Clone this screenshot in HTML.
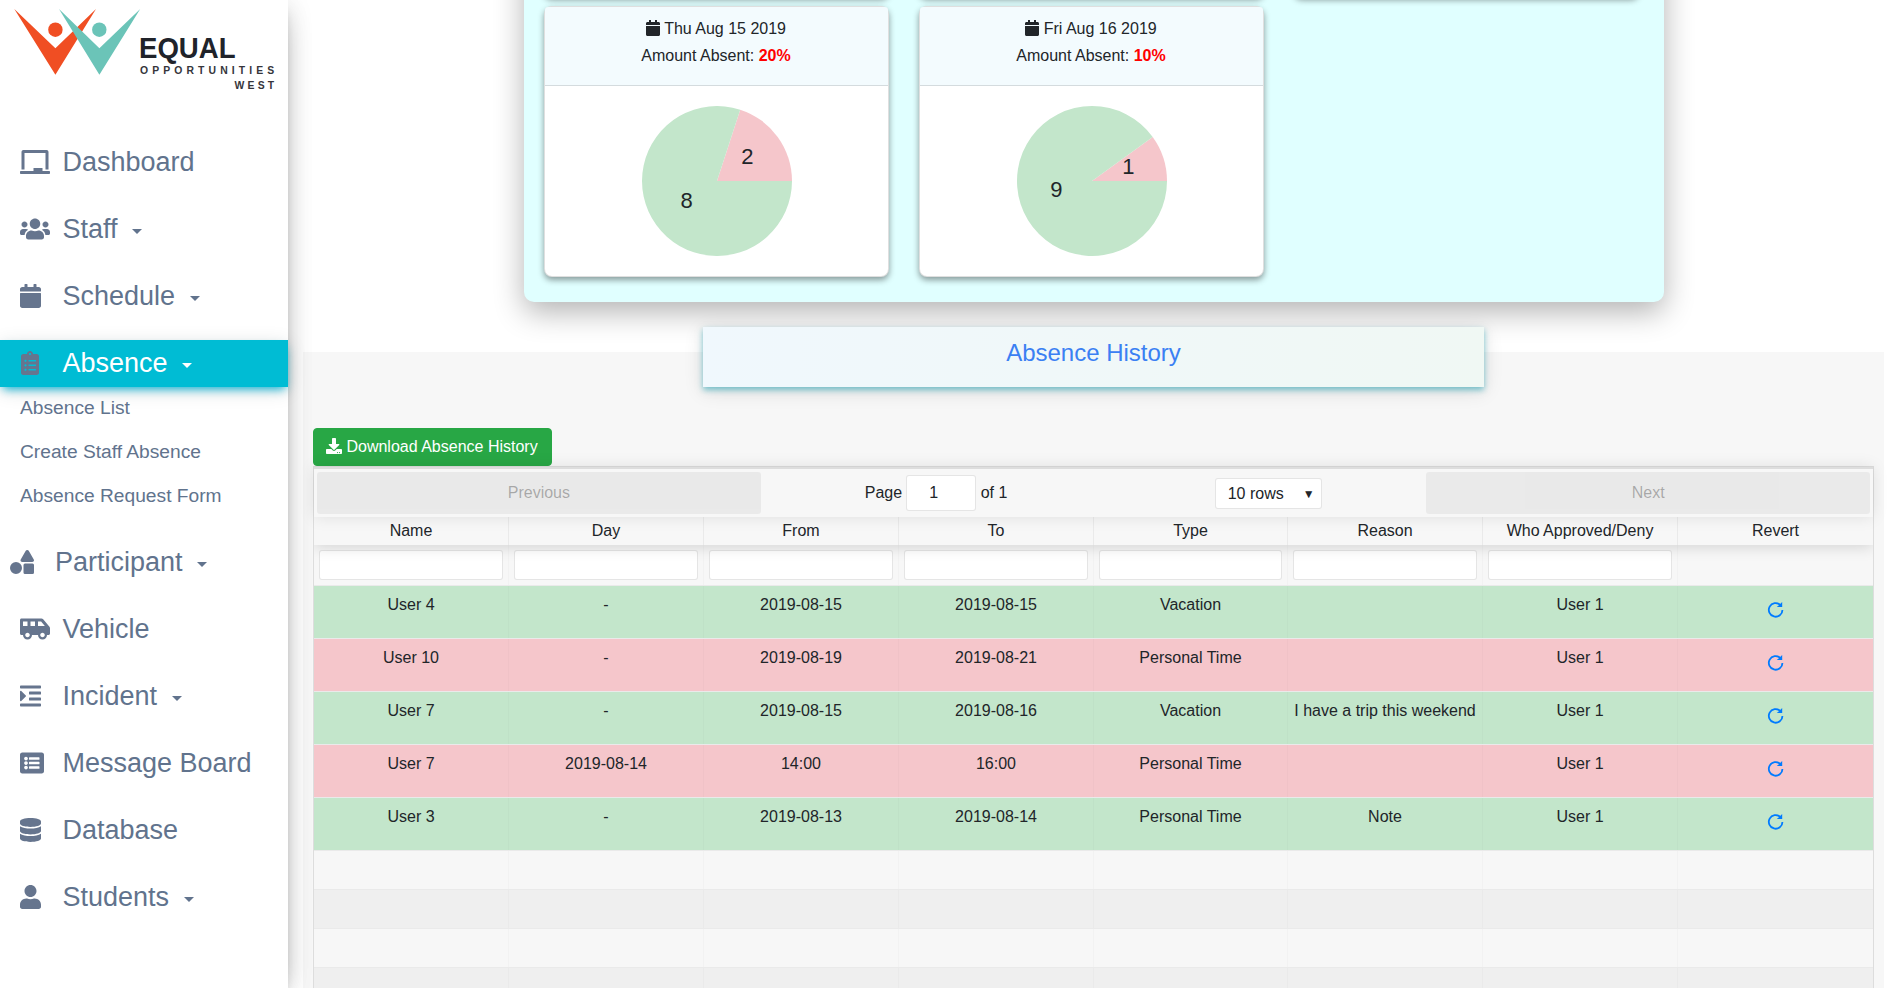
<!DOCTYPE html>
<html lang="en">
<head>
<meta charset="utf-8">
<title>Absence History</title>
<style>
*{box-sizing:border-box}
html,body{margin:0;padding:0}
body{width:1897px;height:988px;overflow:hidden;position:relative;background:#fff;
  font-family:"Liberation Sans",Arial,Helvetica,sans-serif;font-size:16px;line-height:1.5;color:#212529}
svg{display:block}
/* ---------- sidebar ---------- */
#sidebar{position:absolute;left:0;top:0;width:288px;height:988px;background:#fff;z-index:20;
  box-shadow:0 10px 30px -12px rgba(0,0,0,.42),0 4px 25px 0 rgba(0,0,0,.12),0 8px 10px -5px rgba(0,0,0,.2)}
#logo{position:absolute;left:0;top:0}
.nav{position:absolute;left:0;width:288px;height:47px;color:#61738d;text-decoration:none;display:block}
.nav svg{position:absolute;top:11px;left:20px;fill:#66758e}
.nav .t{position:absolute;left:62.5px;top:0;font-size:27px;line-height:47px;white-space:nowrap}
.nav .c{position:absolute;top:23px;width:0;height:0;border-top:5px solid #61738d;border-left:5px solid transparent;border-right:5px solid transparent}
.nav.active{background:#00bcd4;color:#fff;height:46.5px;
  box-shadow:0 5px 9px -3px rgba(0,175,210,.95),0 4px 20px 0 rgba(0,0,0,.12)}
.nav.active .c{border-top-color:#fff}
.nav.active svg{left:21px}
.sub{position:absolute;left:20px;font-size:19.2px;line-height:30px;color:#61738d;white-space:nowrap;text-decoration:none}
/* ---------- main ---------- */
#panel{position:absolute;left:524px;top:-300px;width:1140px;height:602px;background:#e0ffff;border-radius:10px;
  box-shadow:0 10px 30px rgba(0,0,0,.3)}
.card{position:absolute;width:345px;background:#fff;border:1px solid rgba(0,0,0,.125);border-radius:8px;
  box-shadow:0 3px 6px rgba(0,0,0,.4)}
.card .hd{height:79px;background:#f3fbfe;border-bottom:1px solid rgba(0,0,0,.125);border-radius:3px 3px 0 0;
  padding:8px 1px 0 0;text-align:center;line-height:27px}
.card .hd svg{display:inline-block;width:14px;height:16px;vertical-align:-2px;fill:#212529}
.card .hd b{color:#f00}
.card .bd{height:190px;position:relative}
.pie{position:absolute;left:96.500px;top:20px}
.pie text{font-size:22px;fill:#212529;text-anchor:middle}
#gray{position:absolute;left:303px;top:352px;width:1581px;height:700px;background:#f7f7f7}
#banner{position:absolute;left:703px;top:327px;width:781px;height:60px;background:linear-gradient(90deg,#f0f8fd,#f0f8f4);
  box-shadow:0 3px 6px rgba(0,150,170,.5),0 4px 20px rgba(0,0,0,.12);text-align:center;font-size:24px;line-height:52px;color:#3b80f3}
#dl{position:absolute;left:313px;top:428px;width:239px;height:38px;background:#28a745;border:1px solid #28a745;border-radius:4px;
  color:#fff;font-size:16px;line-height:24px;padding:6px 12px;white-space:nowrap}
#dl svg{display:inline-block;width:16px;height:16px;vertical-align:-2px;fill:#fff}
/* ---------- table ---------- */
#rt{position:absolute;left:313px;top:466px;width:1561px;height:600px;border:1px solid rgba(0,0,0,.1)}
#pg{position:relative;height:50px;padding:3px;border-top:2px solid rgba(0,0,0,.1);box-shadow:0 0 15px 0 rgba(0,0,0,.1);display:flex}
#pg .btn{flex:1;height:42px;border-radius:3px;background:rgba(0,0,0,.1);color:rgba(0,0,0,.6);opacity:.5;text-align:center;line-height:42px}
#pg .mid{flex:1.5;position:relative}
#pg .mid span,#pg .mid div{position:absolute;white-space:nowrap}
.inp{border:1px solid rgba(0,0,0,.1);background:#fff;border-radius:3px}
#tb{position:relative;overflow:hidden;height:560px}
#th{position:relative;display:flex;height:28px;box-shadow:0 2px 15px 0 rgba(0,0,0,.15)}
#th div{flex:none;width:195px;text-align:center;line-height:18px;padding:5px;border-right:1px solid rgba(0,0,0,.05)}
#th div:last-child,#fl div:last-child{border-right:0}
#fl{display:flex;height:41px;border-bottom:1px solid rgba(0,0,0,.05)}
#fl div{flex:none;width:195px;padding:5px;border-right:1px solid rgba(0,0,0,.02)}
#fl i{display:block;height:30px}
.tr{display:flex;border-bottom:1px solid rgba(0,0,0,.05);background-clip:padding-box}
.tr div{flex:none;width:195px;text-align:center;padding:7px 5px;border-right:1px solid rgba(0,0,0,.02);line-height:24px;white-space:nowrap;overflow:hidden}
.tr div:last-child{border-right:0}
#th div:nth-child(5),#fl div:nth-child(5),.tr div:nth-child(5){width:194px}
.tr.d{height:53px}
.tr.p{height:39px}
.tr.g{background-color:#c3e6cb}
.tr.r{background-color:#f5c6cb}
.tr.s{background-color:rgba(0,0,0,.03)}
.tr svg{margin:5px auto 0;fill:#007bff}
</style>
</head>
<body>

<div id="main">
  <div id="gray"></div>
  <div id="panel"></div>
  <!-- shadow of previous card row -->
  <div class="card" style="left:544px;top:-300px;height:297px"></div>
  <div class="card" style="left:919px;top:-300px;height:297px"></div>
  <div class="card" style="left:1294px;top:-300px;height:297px"></div>

  <div class="card" style="left:544px;top:6px">
    <div class="hd"><div><svg viewBox="0 0 448 512"><path d="M12 192h424c6.600 0 12 5.400 12 12v260c0 26.500-21.500 48-48 48H48c-26.500 0-48-21.500-48-48V204c0-6.600 5.400-12 12-12zm436-44v-36c0-26.500-21.500-48-48-48h-48V12c0-6.600-5.400-12-12-12h-40c-6.600 0-12 5.400-12 12v52H160V12c0-6.600-5.400-12-12-12h-40c-6.600 0-12 5.400-12 12v52H48C21.500 64 0 85.500 0 112v36c0 6.600 5.400 12 12 12h424c6.600 0 12-5.400 12-12z"/></svg> Thu Aug 15 2019</div><div>Amount Absent: <b>20%</b></div></div>
    <div class="bd">
      <svg class="pie" width="150" height="150" viewBox="-75 -75 150 150">
        <path d="M0 0L75 0A75 75 0 0 0 23.176 -71.329Z" fill="#f5c6cb"/>
        <path d="M0 0L23.176 -71.329A75 75 0 1 0 75 0Z" fill="#c3e6cb"/>
        <text x="30.300" y="-17.100">2</text>
        <text x="-30.3" y="27">8</text>
      </svg>
    </div>
  </div>

  <div class="card" style="left:919px;top:6px">
    <div class="hd"><div><svg viewBox="0 0 448 512"><path d="M12 192h424c6.600 0 12 5.400 12 12v260c0 26.500-21.500 48-48 48H48c-26.500 0-48-21.500-48-48V204c0-6.600 5.400-12 12-12zm436-44v-36c0-26.500-21.500-48-48-48h-48V12c0-6.600-5.400-12-12-12h-40c-6.600 0-12 5.400-12 12v52H160V12c0-6.600-5.400-12-12-12h-40c-6.600 0-12 5.400-12 12v52H48C21.500 64 0 85.500 0 112v36c0 6.600 5.400 12 12 12h424c6.600 0 12-5.400 12-12z"/></svg> Fri Aug 16 2019</div><div>Amount Absent: <b>10%</b></div></div>
    <div class="bd">
      <svg class="pie" width="150" height="150" viewBox="-75 -75 150 150">
        <path d="M0 0L75 0A75 75 0 0 0 60.676 -44.084Z" fill="#f5c6cb"/>
        <path d="M0 0L60.676 -44.084A75 75 0 1 0 75 0Z" fill="#c3e6cb"/>
        <text x="36.300" y="-6.700">1</text>
        <text x="-35.700" y="15.500">9</text>
      </svg>
    </div>
  </div>

  <div id="banner">Absence History</div>

  <div id="dl"><svg viewBox="0 0 512 512"><path d="M216 0h80c13.300 0 24 10.700 24 24v168h87.700c17.800 0 26.700 21.500 14.100 34.100L269.700 378.300c-7.500 7.500-19.800 7.500-27.300 0L90.100 226.100c-12.600-12.600-3.700-34.100 14.100-34.100H192V24c0-13.300 10.700-24 24-24zm296 376v112c0 13.300-10.700 24-24 24H24c-13.300 0-24-10.700-24-24V376c0-13.300 10.700-24 24-24h146.700l49 49c20.100 20.100 52.500 20.100 72.600 0l49-49H488c13.300 0 24 10.700 24 24zm-124 88c0-11-9-20-20-20s-20 9-20 20 9 20 20 20 20-9 20-20zm64 0c0-11-9-20-20-20s-20 9-20 20 9 20 20 20 20-9 20-20z"/></svg> Download Absence History</div>

  <div id="rt">
    <div id="pg">
      <div class="btn">Previous</div>
      <div class="mid">
        <span style="left:104px;top:9px">Page</span>
        <div class="inp" style="left:145px;top:3px;width:70px;height:36px;line-height:34px;text-align:center;padding-right:14px">1</div>
        <span style="left:220px;top:9px">of 1</span>
        <div class="inp" style="left:454px;top:6px;width:107px;height:31px;line-height:30px;padding-left:12px">10 rows<span style="left:87px;top:0;font-size:12px">&#9660;</span></div>
      </div>
      <div class="btn">Next</div>
    </div>
    <div id="tb">
    <div id="th"><div>Name</div><div>Day</div><div>From</div><div>To</div><div>Type</div><div>Reason</div><div>Who Approved/Deny</div><div>Revert</div></div>
    <div id="fl"><div><i class="inp"></i></div><div><i class="inp"></i></div><div><i class="inp"></i></div><div><i class="inp"></i></div><div><i class="inp"></i></div><div><i class="inp"></i></div><div><i class="inp"></i></div><div></div></div>
    <div class="tr d g"><div>User 4</div><div>-</div><div>2019-08-15</div><div>2019-08-15</div><div>Vacation</div><div></div><div>User 1</div><div><svg width="24" height="24" viewBox="0 0 24 24"><path d="M18.43 11.90A6.8 6.8 0 1 1 16.27 6.93" fill="none" stroke="#007bff" stroke-width="1.800"/><path d="M18.200 4.100v5H12.800z"/></svg></div></div>
    <div class="tr d r"><div>User 10</div><div>-</div><div>2019-08-19</div><div>2019-08-21</div><div>Personal Time</div><div></div><div>User 1</div><div><svg width="24" height="24" viewBox="0 0 24 24"><path d="M18.43 11.90A6.8 6.8 0 1 1 16.27 6.93" fill="none" stroke="#007bff" stroke-width="1.800"/><path d="M18.200 4.100v5H12.800z"/></svg></div></div>
    <div class="tr d g"><div>User 7</div><div>-</div><div>2019-08-15</div><div>2019-08-16</div><div>Vacation</div><div>I have a trip this weekend</div><div>User 1</div><div><svg width="24" height="24" viewBox="0 0 24 24"><path d="M18.43 11.90A6.8 6.8 0 1 1 16.27 6.93" fill="none" stroke="#007bff" stroke-width="1.800"/><path d="M18.200 4.100v5H12.800z"/></svg></div></div>
    <div class="tr d r"><div>User 7</div><div>2019-08-14</div><div>14:00</div><div>16:00</div><div>Personal Time</div><div></div><div>User 1</div><div><svg width="24" height="24" viewBox="0 0 24 24"><path d="M18.43 11.90A6.8 6.8 0 1 1 16.27 6.93" fill="none" stroke="#007bff" stroke-width="1.800"/><path d="M18.200 4.100v5H12.800z"/></svg></div></div>
    <div class="tr d g"><div>User 3</div><div>-</div><div>2019-08-13</div><div>2019-08-14</div><div>Personal Time</div><div>Note</div><div>User 1</div><div><svg width="24" height="24" viewBox="0 0 24 24"><path d="M18.43 11.90A6.8 6.8 0 1 1 16.27 6.93" fill="none" stroke="#007bff" stroke-width="1.800"/><path d="M18.200 4.100v5H12.800z"/></svg></div></div>
    <div class="tr p"><div></div><div></div><div></div><div></div><div></div><div></div><div></div><div></div></div>
    <div class="tr p s"><div></div><div></div><div></div><div></div><div></div><div></div><div></div><div></div></div>
    <div class="tr p"><div></div><div></div><div></div><div></div><div></div><div></div><div></div><div></div></div>
    <div class="tr p s"><div></div><div></div><div></div><div></div><div></div><div></div><div></div><div></div></div>
    <div class="tr p"><div></div><div></div><div></div><div></div><div></div><div></div><div></div><div></div></div>
    </div>
  </div>
</div>

<div id="sidebar">
  <svg id="logo" width="288" height="100" viewBox="0 0 288 100">
    <path fill="#f04e23" d="M14.300 9.100L55.400 74.700L96 9.100L55.400 48.300Z"/>
    <circle fill="#f04e23" cx="55.400" cy="29.700" r="7.200"/>
    <path fill="#6bc4b8" d="M59 9.100L99.400 74.700L140.200 9.100L99.400 48.300Z"/>
    <circle fill="#6bc4b8" cx="99.300" cy="29.700" r="7.200"/>
    <text x="139" y="57.900" font-family="Liberation Sans, Arial, sans-serif" font-weight="bold" font-size="29.400" fill="#20232a" textLength="96.500" lengthAdjust="spacingAndGlyphs">EQUAL</text>
    <text x="140" y="74" font-family="Liberation Sans, Arial, sans-serif" font-weight="bold" font-size="10.400" fill="#35353b" textLength="134.200" lengthAdjust="spacing">OPPORTUNITIES</text>
    <text x="234.600" y="89" font-family="Liberation Sans, Arial, sans-serif" font-weight="bold" font-size="10.400" fill="#35353b" textLength="39.600" lengthAdjust="spacing">WEST</text>
  </svg>

  <a class="nav" style="top:139px"><svg width="30" height="24" viewBox="0 0 640 512"><path d="M96 64h448v352h64V40c0-22.060-17.940-40-40-40H72C49.940 0 32 17.940 32 40v376h64V64zm528 384H480v-64H288v64H16c-8.840 0-16 7.160-16 16v32c0 8.840 7.160 16 16 16h608c8.840 0 16-7.160 16-16v-32c0-8.840-7.160-16-16-16z"/></svg><span class="t">Dashboard</span></a>

  <a class="nav" style="top:206px"><svg width="30" height="24" viewBox="0 0 640 512"><path d="M96 224c35.300 0 64-28.700 64-64s-28.700-64-64-64-64 28.700-64 64 28.700 64 64 64zm448 0c35.300 0 64-28.700 64-64s-28.700-64-64-64-64 28.700-64 64 28.700 64 64 64zm32 32h-64c-17.600 0-33.500 7.100-45.100 18.600 40.300 22.100 68.900 62 75.100 109.400h66c17.700 0 32-14.300 32-32v-32c0-35.300-28.700-64-64-64zm-256 0c61.900 0 112-50.100 112-112S381.900 32 320 32 208 82.100 208 144s50.100 112 112 112zm76.800 32h-8.300c-20.800 10-43.900 16-68.500 16s-47.600-6-68.500-16h-8.300C179.600 288 128 339.600 128 403.200V432c0 26.500 21.500 48 48 48h288c26.500 0 48-21.500 48-48v-28.800c0-63.600-51.600-115.200-115.200-115.200zm-223.700-13.400C161.500 263.100 145.600 256 128 256H64c-35.300 0-64 28.700-64 64v32c0 17.700 14.300 32 32 32h65.900c6.300-47.400 34.900-87.300 75.200-109.400z"/></svg><span class="t">Staff</span><i class="c" style="left:132px"></i></a>

  <a class="nav" style="top:273px"><svg width="21" height="24" viewBox="0 0 448 512"><path d="M12 192h424c6.600 0 12 5.400 12 12v260c0 26.500-21.500 48-48 48H48c-26.500 0-48-21.500-48-48V204c0-6.600 5.400-12 12-12zm436-44v-36c0-26.500-21.500-48-48-48h-48V12c0-6.600-5.400-12-12-12h-40c-6.600 0-12 5.400-12 12v52H160V12c0-6.600-5.400-12-12-12h-40c-6.600 0-12 5.400-12 12v52H48C21.500 64 0 85.500 0 112v36c0 6.600 5.400 12 12 12h424c6.600 0 12-5.400 12-12z"/></svg><span class="t">Schedule</span><i class="c" style="left:190px"></i></a>

  <a class="nav active" style="top:340px"><svg width="18" height="24" viewBox="0 0 384 512"><path d="M336 64h-80c0-35.300-28.700-64-64-64s-64 28.700-64 64H48C21.500 64 0 85.500 0 112v352c0 26.500 21.500 48 48 48h288c26.500 0 48-21.500 48-48V112c0-26.500-21.500-48-48-48zM96 424c-13.300 0-24-10.700-24-24s10.700-24 24-24 24 10.700 24 24-10.700 24-24 24zm0-96c-13.300 0-24-10.700-24-24s10.700-24 24-24 24 10.700 24 24-10.700 24-24 24zm0-96c-13.300 0-24-10.700-24-24s10.700-24 24-24 24 10.700 24 24-10.700 24-24 24zm96-192c13.300 0 24 10.700 24 24s-10.700 24-24 24-24-10.700-24-24 10.700-24 24-24zm128 368c0 4.400-3.600 8-8 8H168c-4.400 0-8-3.600-8-8v-16c0-4.400 3.600-8 8-8h144c4.400 0 8 3.600 8 8v16zm0-96c0 4.400-3.600 8-8 8H168c-4.400 0-8-3.600-8-8v-16c0-4.400 3.600-8 8-8h144c4.400 0 8 3.600 8 8v16zm0-96c0 4.400-3.600 8-8 8H168c-4.400 0-8-3.600-8-8v-16c0-4.400 3.600-8 8-8h144c4.400 0 8 3.600 8 8v16z"/></svg><span class="t">Absence</span><i class="c" style="left:182px"></i></a>

  <a class="sub" style="top:393px">Absence List</a>
  <a class="sub" style="top:437px">Create Staff Absence</a>
  <a class="sub" style="top:481px">Absence Request Form</a>

  <a class="nav" style="top:539px"><svg style="left:10px" width="24" height="24" viewBox="0 0 512 512"><path d="M128,256A128,128,0,1,0,256,384,128,128,0,0,0,128,256Zm379-54.860L400.070,18.290a37.260,37.260,0,0,0-64.140,0L229,201.140C214.760,225.520,232.580,256,261.090,256H474.910C503.420,256,521.240,225.520,507,201.140ZM480,288H320a32,32,0,0,0-32,32V480a32,32,0,0,0,32,32H480a32,32,0,0,0,32-32V320A32,32,0,0,0,480,288Z"/></svg><span class="t" style="left:55px">Participant</span><i class="c" style="left:197px"></i></a>

  <a class="nav" style="top:606px"><svg width="30" height="24" viewBox="0 0 640 512"><path d="M628.880 210.650L494.390 49.270A48.010 48.010 0 0 0 457.520 32H32C14.330 32 0 46.330 0 64v288c0 17.670 14.330 32 32 32h32c0 53.020 42.980 96 96 96s96-42.980 96-96h128c0 53.020 42.980 96 96 96s96-42.980 96-96h32c17.670 0 32-14.330 32-32V241.380c0-11.230-3.940-22.100-11.120-30.730zM64 192V96h96v96H64zm96 240c-26.510 0-48-21.490-48-48s21.490-48 48-48 48 21.490 48 48-21.490 48-48 48zm160-240h-96V96h96v96zm160 240c-26.510 0-48-21.490-48-48s21.490-48 48-48 48 21.490 48 48-21.490 48-48 48zm-96-240V96h66.020l80 96H384z"/></svg><span class="t">Vehicle</span></a>

  <a class="nav" style="top:673px"><svg width="21" height="24" viewBox="0 0 448 512"><path d="M27.310 363.300l96-96a16 16 0 0 0 0-22.620l-96-96C17.270 138.660 0 145.780 0 160v192c0 14.310 17.330 21.300 27.310 11.300zM432 416H16a16 16 0 0 0-16 16v32a16 16 0 0 0 16 16h416a16 16 0 0 0 16-16v-32a16 16 0 0 0-16-16zm3.170-128H204.830A12.820 12.820 0 0 0 192 300.830v38.340A12.820 12.820 0 0 0 204.830 352h230.340A12.820 12.820 0 0 0 448 339.170v-38.340A12.820 12.820 0 0 0 435.170 288zm0-128H204.830A12.820 12.820 0 0 0 192 172.830v38.340A12.820 12.820 0 0 0 204.830 224h230.340A12.820 12.820 0 0 0 448 211.170v-38.340A12.820 12.820 0 0 0 435.170 160zM432 32H16A16 16 0 0 0 0 48v32a16 16 0 0 0 16 16h416a16 16 0 0 0 16-16V48a16 16 0 0 0-16-16z"/></svg><span class="t">Incident</span><i class="c" style="left:172px"></i></a>

  <a class="nav" style="top:740px"><svg width="24" height="24" viewBox="0 0 512 512"><path d="M464 480H48c-26.510 0-48-21.490-48-48V80c0-26.510 21.490-48 48-48h416c26.510 0 48 21.490 48 48v352c0 26.510-21.490 48-48 48zM128 120c-22.091 0-40 17.909-40 40s17.909 40 40 40 40-17.909 40-40-17.909-40-40-40zm0 96c-22.091 0-40 17.909-40 40s17.909 40 40 40 40-17.909 40-40-17.909-40-40-40zm0 96c-22.091 0-40 17.909-40 40s17.909 40 40 40 40-17.909 40-40-17.909-40-40-40zm288-136v-32c0-6.627-5.373-12-12-12H204c-6.627 0-12 5.373-12 12v32c0 6.627 5.373 12 12 12h200c6.627 0 12-5.373 12-12zm0 96v-32c0-6.627-5.373-12-12-12H204c-6.627 0-12 5.373-12 12v32c0 6.627 5.373 12 12 12h200c6.627 0 12-5.373 12-12zm0 96v-32c0-6.627-5.373-12-12-12H204c-6.627 0-12 5.373-12 12v32c0 6.627 5.373 12 12 12h200c6.627 0 12-5.373 12-12z"/></svg><span class="t">Message Board</span></a>

  <a class="nav" style="top:807px"><svg width="21" height="24" viewBox="0 0 448 512"><path d="M448 73.143v45.714C448 159.143 347.667 192 224 192S0 159.143 0 118.857V73.143C0 32.857 100.333 0 224 0s224 32.857 224 73.143zM448 176v102.857C448 319.143 347.667 352 224 352S0 319.143 0 278.857V176c48.125 33.143 136.208 48.572 224 48.572S399.874 209.143 448 176zm0 160v102.857C448 479.143 347.667 512 224 512S0 479.143 0 438.857V336c48.125 33.143 136.208 48.572 224 48.572S399.874 369.143 448 336z"/></svg><span class="t">Database</span></a>

  <a class="nav" style="top:874px"><svg width="21" height="24" viewBox="0 0 448 512"><path d="M224 256c70.700 0 128-57.300 128-128S294.700 0 224 0 96 57.300 96 128s57.300 128 128 128zm89.600 32h-16.700c-22.200 10.200-46.900 16-72.900 16s-50.600-5.800-72.900-16h-16.700C60.200 288 0 348.200 0 422.400V464c0 26.500 21.500 48 48 48h352c26.500 0 48-21.500 48-48v-41.600c0-74.200-60.200-134.400-134.400-134.400z"/></svg><span class="t">Students</span><i class="c" style="left:184px"></i></a>
</div>

</body>
</html>
